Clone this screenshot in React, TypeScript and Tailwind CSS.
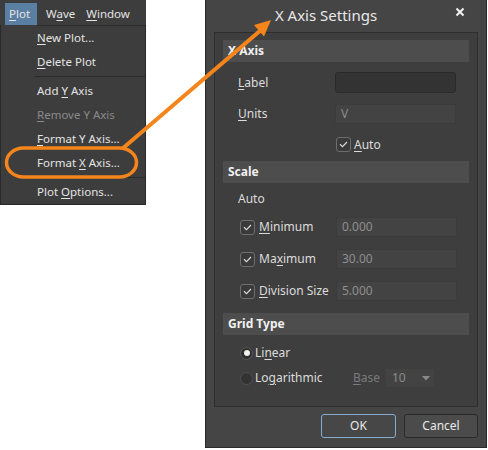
import React from "react";

const U = ({ children }: { children: React.ReactNode }) => (
  <span className="underline underline-offset-[2px] decoration-[1px]">{children}</span>
);

const Check = () => (
  <div className="w-[15px] h-[15px] rounded-[3px] border border-[#6e6e6e] bg-[#3a3a3a] flex items-center justify-center shrink-0">
    <svg width="9" height="7" viewBox="0 0 9 7">
      <path d="M1 3.2 L3.5 5.6 L8 1" fill="none" stroke="#d8d8d8" strokeWidth="1.2" />
    </svg>
  </div>
);

const Header = ({ children, mt }: { children: React.ReactNode; mt: string }) => (
  <div className={`mx-[8px] h-[22px] bg-[#4d4d4d] flex items-center pl-[5px] text-[12px] font-bold text-[#f0f0f0] ${mt}`}>
    <span>{children}</span>
  </div>
);

const Field = ({ value, dark }: { value: string; dark?: boolean }) => (
  <div
    className={
      dark
        ? "w-[121px] h-[21px] rounded-[3px] bg-[#333333] border border-[#2a2a2a]"
        : "w-[121px] h-[20px] rounded-[2px] bg-[#434343] border border-[#3b3b3b] flex items-center pl-[5px] text-[12px] text-[#8e8e8e]"
    }
  >
    {value}
  </div>
);

const MenuItem = ({ children, disabled }: { children: React.ReactNode; disabled?: boolean }) => (
  <div className={`h-[24px] flex items-center pl-[36px] text-[11.5px] ${disabled ? "text-[#8a8a8a]" : "text-[#e4e4e4]"}`}>
    <span>{children}</span>
  </div>
);

const Sep = () => (
  <div className="h-[5px] flex items-center pl-[33px]">
    <div className="h-px w-full bg-[#2a2a2a]" />
  </div>
);

export default function App() {
  return (
    <div className="relative w-[488px] h-[450px] bg-white flex overflow-hidden font-['Noto_Sans',sans-serif]">
      {/* Menu */}
      <div className="w-[146px] self-start flex flex-col">
        <div className="h-[25px] bg-[#3d3d3d] flex items-end pl-[5px] text-[11.5px] text-[#e4e4e4]">
          <div className="w-[32px] h-[22px] bg-[#5b7fa3] flex items-center pl-[4px]">
            <span>
              <U>P</U>lot
            </span>
          </div>
          <div className="h-[22px] flex items-center ml-[9px]">
            <span>
              W<U>a</U>ve
            </span>
          </div>
          <div className="h-[22px] flex items-center ml-[11px]">
            <span>
              <U>W</U>indow
            </span>
          </div>
        </div>
        <div className="bg-[#3d3d3d] border-l border-r border-b border-[#2a2a2a] pt-px relative">
          <div className="absolute top-0 left-[36px] right-0 h-px bg-[#2a2a2a]" />
          <MenuItem>
            <U>N</U>ew Plot...
          </MenuItem>
          <MenuItem>
            <U>D</U>elete Plot
          </MenuItem>
          <Sep />
          <MenuItem>
            Add <U>Y</U> Axis
          </MenuItem>
          <MenuItem disabled>
            <U>R</U>emove Y Axis
          </MenuItem>
          <MenuItem>
            <U>F</U>ormat Y Axis...
          </MenuItem>
          <MenuItem>
            Format <U>X</U> Axis...
          </MenuItem>
          <Sep />
          <MenuItem>
            Plot <U>O</U>ptions...
          </MenuItem>
        </div>
      </div>

      {/* Dialog */}
      <div className="ml-[59px] w-[282px] h-[448px] bg-[#454545] border border-[#2b2b2b] border-t-0 flex flex-col">
        <div className="h-[32px] flex items-start">
          <div className="flex-1 text-center text-[15px] text-[#e8e8e8] pt-[4px]">X Axis Settings</div>
          <div className="w-[28px] mr-[12px] h-[24px] flex items-center justify-center">
            <svg width="10" height="10" viewBox="0 0 10 10">
              <path d="M1.5 1.5 L8.5 8.5 M8.5 1.5 L1.5 8.5" stroke="#f2f2f2" strokeWidth="2" />
            </svg>
          </div>
        </div>

        <div className="mx-[8px] h-[375px] bg-[#3e3e3e] border border-[#2e2e2e] flex flex-col text-[12px] text-[#dcdcdc]">
          <Header mt="mt-[7px]">X Axis</Header>

          <div className="mt-[10px] flex items-center pl-[23px]">
            <div className="w-[97px]">
              <U>L</U>abel
            </div>
            <Field value="" dark />
          </div>

          <div className="mt-[11px] flex items-center pl-[23px]">
            <div className="w-[97px]">
              <U>U</U>nits
            </div>
            <Field value="V" />
          </div>

          <div className="mt-[13px] h-[15px] flex items-center pl-[121px] gap-[3px]">
            <Check />
            <span>
              <U>A</U>uto
            </span>
          </div>

          <Header mt="mt-[9px]">Scale</Header>

          <div className="mt-[6px] h-[20px] flex items-center pl-[23px]">
            <span>Auto</span>
          </div>

          {[
            { l: <><U>M</U>inimum</>, v: "0.000", mt: "mt-[8px]" },
            { l: <>Ma<U>x</U>imum</>, v: "30.00", mt: "mt-[12px]" },
            { l: <><U>D</U>ivision Size</>, v: "5.000", mt: "mt-[12px]" },
          ].map((r, i) => (
            <div key={i} className={`${r.mt} flex items-center pl-[25px]`}>
              <Check />
              <div className="w-[81px] pl-[4px]">{r.l}</div>
              <Field value={r.v} />
            </div>
          ))}

          <Header mt="mt-[12px]">Grid Type</Header>

          <div className="mt-[8px] h-[20px] flex items-center pl-[25px] gap-[2px]">
            <div className="w-[13px] h-[13px] rounded-full bg-[#2f2f2f] border border-[#5a5a5a] flex items-center justify-center">
              <div className="w-[6px] h-[6px] rounded-full bg-[#f0f0f0]" />
            </div>
            <span>
              Li<U>n</U>ear
            </span>
          </div>

          <div className="mt-[5px] h-[20px] flex items-center pl-[25px]">
            <div className="w-[13px] h-[13px] rounded-full bg-[#333333] border border-[#505050]" />
            <span className="ml-[2px] w-[98px]">
              Lo<U>g</U>arithmic
            </span>
            <span className="text-[#7a7a7a] w-[33px]">
              <U>B</U>ase
            </span>
            <div className="w-[48px] h-[18px] bg-[#434343] flex items-center pl-[6px] text-[#8a8a8a]">
              <span className="flex-1">10</span>
              <svg width="8" height="5" viewBox="0 0 8 5" className="mr-[4px]">
                <path d="M0 0 L8 0 L4 4.5 Z" fill="#8a8a8a" />
              </svg>
            </div>
          </div>
        </div>

        <div className="mt-[7px] flex justify-end gap-[8px] mr-[8px] text-[12px] text-[#e8e8e8]">
          <div className="w-[75px] h-[24px] rounded-[3px] border border-[#86acd2] bg-[#474747] flex items-center justify-center">
            OK
          </div>
          <div className="w-[74px] h-[24px] rounded-[3px] border border-[#2a2a2a] bg-[#4b4b4b] flex items-center justify-center">
            Cancel
          </div>
        </div>
      </div>

      {/* Annotation overlay */}
      <svg className="absolute inset-0 pointer-events-none" width="488" height="450" viewBox="0 0 488 450">
        <rect x="6.5" y="148" width="130" height="29" rx="17" ry="14.5" fill="none" stroke="#f3851c" strokeWidth="3.5" />
        <line x1="122" y1="149" x2="261" y2="30" stroke="#f3851c" strokeWidth="4" />
        <polygon points="271,20 264,36.5 254,25" fill="#f3851c" />
      </svg>
    </div>
  );
}
